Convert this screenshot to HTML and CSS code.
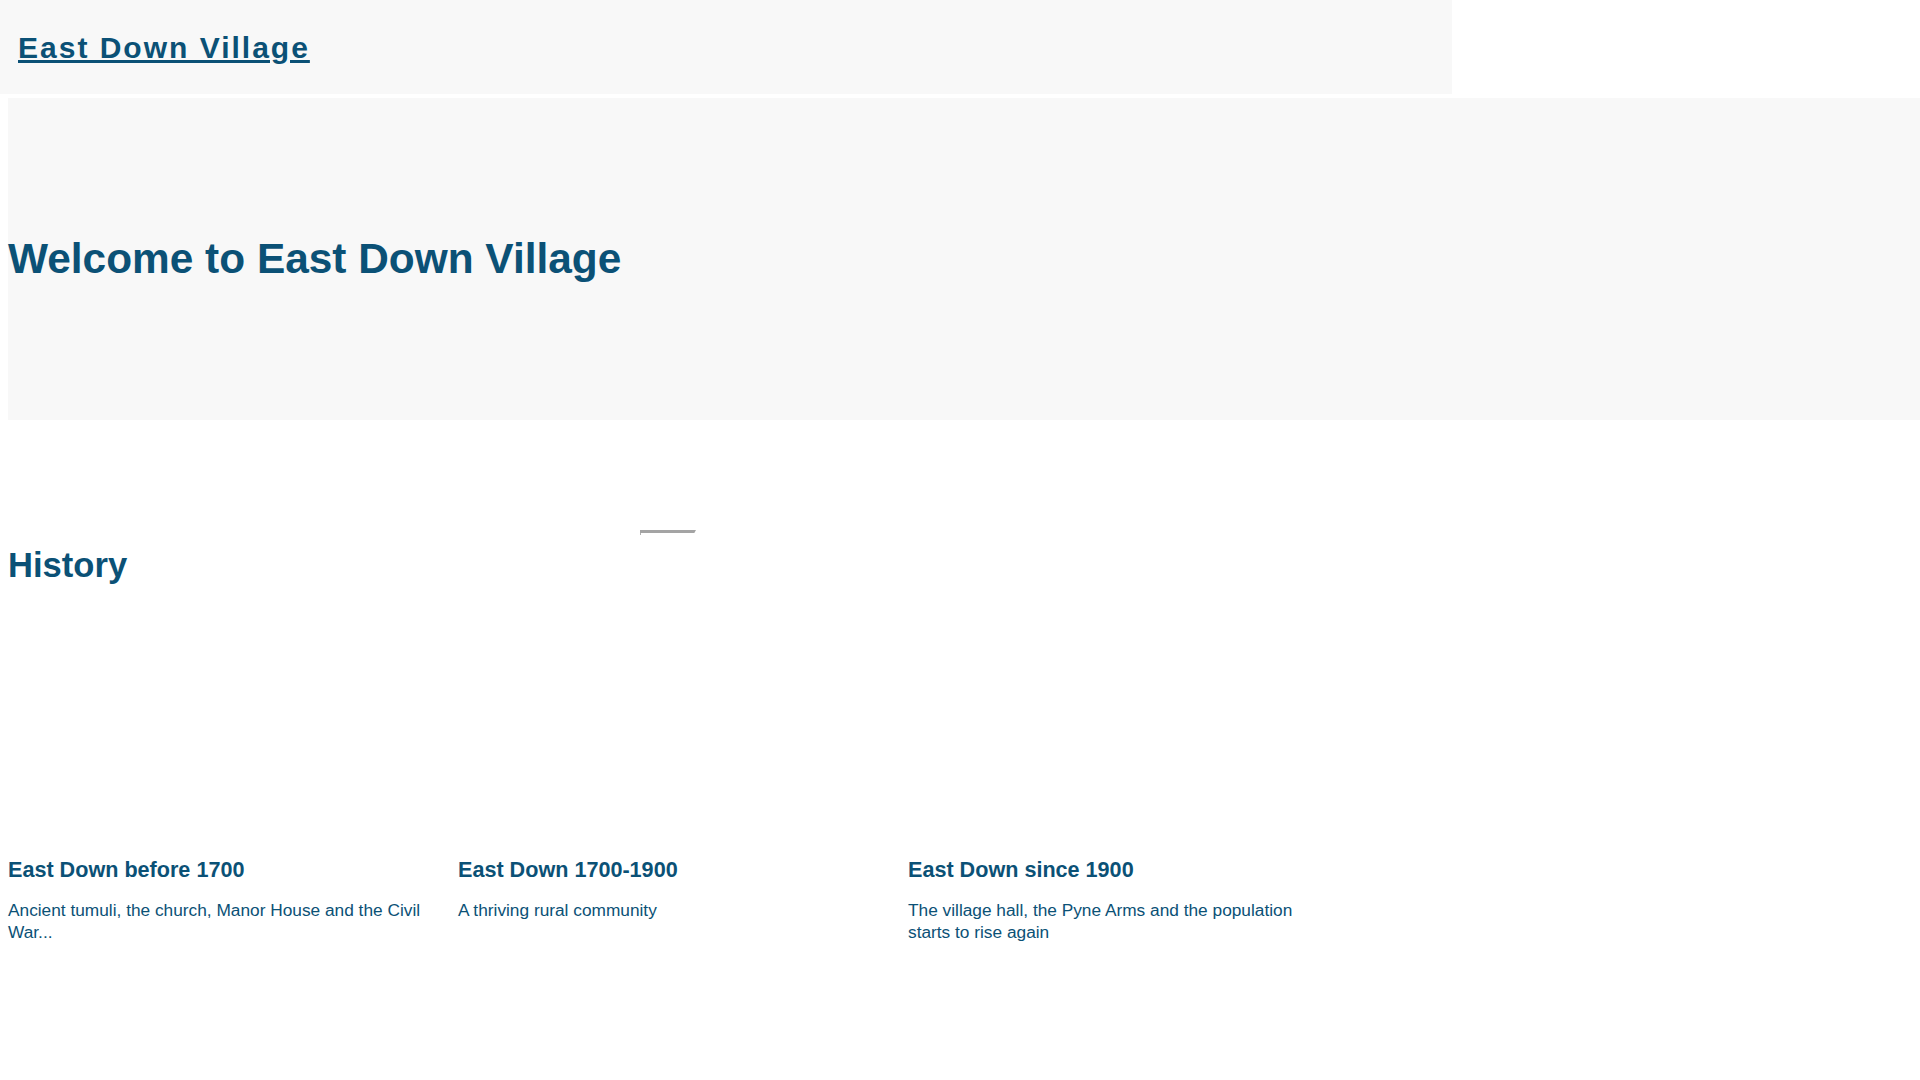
FILE: index.html
```html
<!DOCTYPE html>
<html lang="en">
<head>
<meta charset="utf-8">
<title>East Down Village</title>
<link rel="stylesheet" href="styles.css">
</head>
<body>
<header class="site-header">
  <a class="site-title" href="#">East Down Village</a>
</header>
<main class="content">
  <section class="hero">
    <h1 class="hero-title">Welcome to East Down Village</h1>
  </section>
  <div class="stray-bar"></div>
  <section class="history">
    <h2 class="section-title">History</h2>
    <div class="cards">
      <article class="card">
        <div class="card-image"></div>
        <h3 class="card-title">East Down before 1700</h3>
        <p class="card-text">Ancient tumuli, the church, Manor House and the Civil War...</p>
      </article>
      <article class="card">
        <div class="card-image"></div>
        <h3 class="card-title">East Down 1700-1900</h3>
        <p class="card-text">A thriving rural community</p>
      </article>
      <article class="card">
        <div class="card-image"></div>
        <h3 class="card-title">East Down since 1900</h3>
        <p class="card-text">The village hall, the Pyne Arms and the population starts to rise again</p>
      </article>
    </div>
  </section>
</main>
</body>
</html>
```
FILE: styles.css
```css
html, body {
  margin: 0;
  padding: 0;
}
body {
  font-family: "Liberation Sans", Arial, sans-serif;
  color: #0b5176;
  background: #ffffff;
}
.site-header {
  width: 1452px;
  height: 94px;
  background: #f8f8f8;
  display: flex;
  align-items: center;
  padding: 2px 0 0 18px;
  box-sizing: border-box;
}
.site-title {
  font-size: 30px;
  font-weight: bold;
  letter-spacing: 2px;
  color: #0b5176;
  text-decoration: underline;
  text-decoration-thickness: 3px;
  text-underline-offset: 2px;
}
.content {
  padding: 0 0 140px 8px;
}
.hero {
  margin-top: 4px;
  width: 100vw;
  height: 322px;
  background: #f8f8f8;
  display: flex;
  align-items: center;
}
.hero-title {
  margin: 0;
  font-size: 42.4px;
  font-weight: bold;
  line-height: normal;
}
.stray-bar {
  margin: 110px 0 0 632px;
  width: 56px;
  height: 5px;
  background: linear-gradient(to bottom, #a4a4a4 0 3px, transparent 3px),
              linear-gradient(to right, #b0b0b0 0 1px, transparent 1px);
  clip-path: polygon(0 0, 100% 0, 97% 60%, 2% 60%, 2% 100%, 0 100%);
}
.section-title {
  margin: 11px 0 0;
  font-size: 34.6px;
  font-weight: bold;
  line-height: normal;
}
.cards {
  display: grid;
  grid-template-columns: repeat(3, 430px);
  column-gap: 20px;
}
.card-image {
  height: 272px;
}
.card-title {
  margin: 0;
  font-size: 21.6px;
  font-weight: bold;
  line-height: normal;
}
.card-text {
  margin: 17px 0 0;
  font-size: 17.3px;
  line-height: 21.7px;
}
```
